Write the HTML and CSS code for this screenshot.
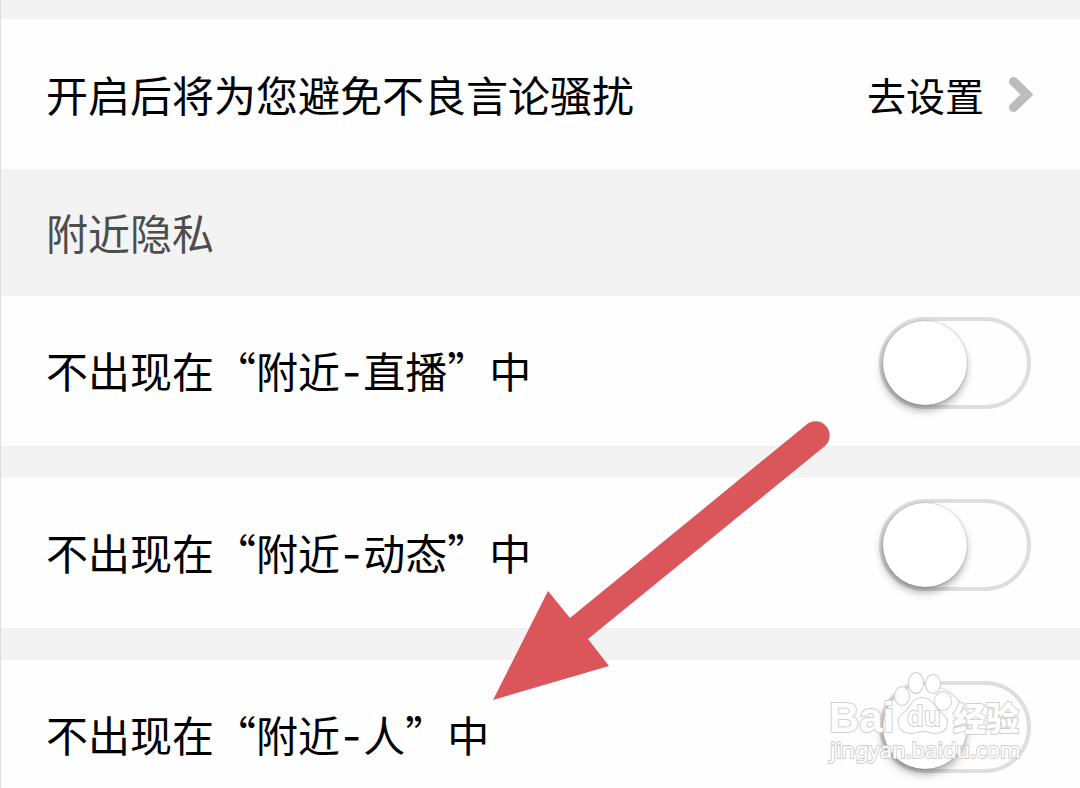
FILE: index.html
```html
<!DOCTYPE html>
<html lang="zh-CN">
<head>
    <meta charset="UTF-8">
    <meta name="viewport" content="width=device-width, initial-scale=1.0">
    <title>附近隐私</title>
    <link rel="stylesheet" href="styles.css">
</head>
<body>
    <div class="settings">
        <div class="row">
            <span class="row-text">开启后将为您避免不良言论骚扰</span>
            <a class="row-link" href="#">
                去设置
                <svg class="chevron" viewBox="0 0 26 38" aria-hidden="true">
                    <path d="M5.500 6.500L19 19.500L5.500 32.500"/>
                </svg>
            </a>
        </div>

        <h2 class="section-title">附近隐私</h2>

        <div class="row">
            <label class="row-text" for="hide-live">不出现在“附近<span class="dash">-</span>直播”中</label>
            <input class="switch" type="checkbox" id="hide-live">
        </div>
        <div class="row divided">
            <label class="row-text" for="hide-feed">不出现在“附近<span class="dash">-</span>动态”中</label>
            <input class="switch" type="checkbox" id="hide-feed">
        </div>
        <div class="row divided">
            <label class="row-text" for="hide-people">不出现在“附近<span class="dash">-</span>人”中</label>
            <input class="switch" type="checkbox" id="hide-people">
        </div>

        <svg class="arrow" viewBox="0 0 338 280" aria-hidden="true">
            <path d="M1 280L56 171L78 198L314 5A14 14 0 0 1 333 26L96 219L117 246Z"/>
        </svg>

        <svg class="watermark" viewBox="0 0 200 100">
            <text class="mark-name" x="2" y="61">Bai</text>
            <g class="paw">
                <ellipse cx="75" cy="25" rx="7" ry="9"/>
                <ellipse cx="89" cy="12" rx="7" ry="10"/>
                <ellipse cx="106" cy="13" rx="7" ry="9"/>
                <ellipse cx="116" cy="30" rx="8" ry="9"/>
                <path d="M95 27C85 27 84 37 77 42C67 49 72 62 84 62C89 62 91 60 96 60C101 60 103 62 108 62C121 62 124 49 114 42C107 36 105 27 95 27Z"/>
            </g>
            <text class="mark-du" x="80" y="55">du</text>
            <text class="mark-cn" x="126" y="60">经验</text>
            <text class="mark-url" x="3" y="87">jingyan.baidu.com</text>
        </svg>
    </div>
</body>
</html>
```
FILE: styles.css
```css
body {
    margin: 0;
    height: 100vh;
    overflow: hidden;
    background-color: #f3f3f3;
    font-family: "Noto Sans CJK SC", sans-serif;
    color: #000;
}
.settings {
    position: relative;
    padding-top: 19px;
    border-left: 1px solid #ddd;
}
.row {
    display: flex;
    align-items: center;
    justify-content: space-between;
    box-sizing: border-box;
    height: 150px;
    padding: 0 49px 0 45px;
    background-color: #fefefe;
}
.divided {
    margin-top: 32px;
    box-shadow: 0 -31px 0 #f3f3f3, 0 -32px 0 #ececec;
}
.row-text {
    font-size: 42px;
    line-height: 60px;
}
.dash {
    padding: 0 2px;
    font-family: Inter, sans-serif;
}
.row-link {
    display: flex;
    align-items: center;
    gap: 24px;
    margin-right: -3px;
    font-size: 39px;
    line-height: 60px;
    color: #000;
    text-decoration: none;
}
.chevron {
    width: 26px;
    height: 38px;
    fill: none;
    stroke: #bcbcbc;
    stroke-width: 9px;
    stroke-linecap: round;
}
.section-title {
    margin: 0;
    padding: 33px 45px 34px;
    font-size: 42px;
    font-weight: 400;
    line-height: 60px;
    color: #4d4d4d;
}

/* toggle switch */
.switch {
    appearance: none;
    box-sizing: border-box;
    width: 152px;
    height: 92px;
    margin: 0 0 16px;
    border: 4px solid #dedede;
    border-radius: 46px;
    background-color: #fefefe;
    cursor: pointer;
}
.switch::before {
    content: "";
    display: block;
    width: 84px;
    height: 84px;
    border-radius: 50%;
    background-color: #fff;
    box-shadow: -1px 5px 8px rgba(0, 0, 0, 0.35), 0 0 2px rgba(0, 0, 0, 0.3);
}
.switch:checked::before {
    margin-left: auto;
}

/* overlays */
.arrow {
    position: absolute;
    top: 420px;
    left: 491px;
    width: 338px;
    height: 280px;
    fill: #da565b;
    pointer-events: none;
}
.watermark {
    position: absolute;
    top: 671px;
    right: 53px;
    width: 200px;
    height: 100px;
    fill: #fff;
    stroke: #d0d0d0;
    stroke-width: 2px;
    paint-order: stroke;
    pointer-events: none;
}
.paw {
    stroke-width: 2px;
}
.mark-name {
    font: bold 42px "Liberation Sans", sans-serif;
}
.mark-du {
    font: 600 27px "Open Sans", sans-serif;
}
.mark-cn {
    font: 900 33px "Noto Sans CJK SC", sans-serif;
}
.mark-url {
    font: 22px "Noto Sans", sans-serif;
}
```
